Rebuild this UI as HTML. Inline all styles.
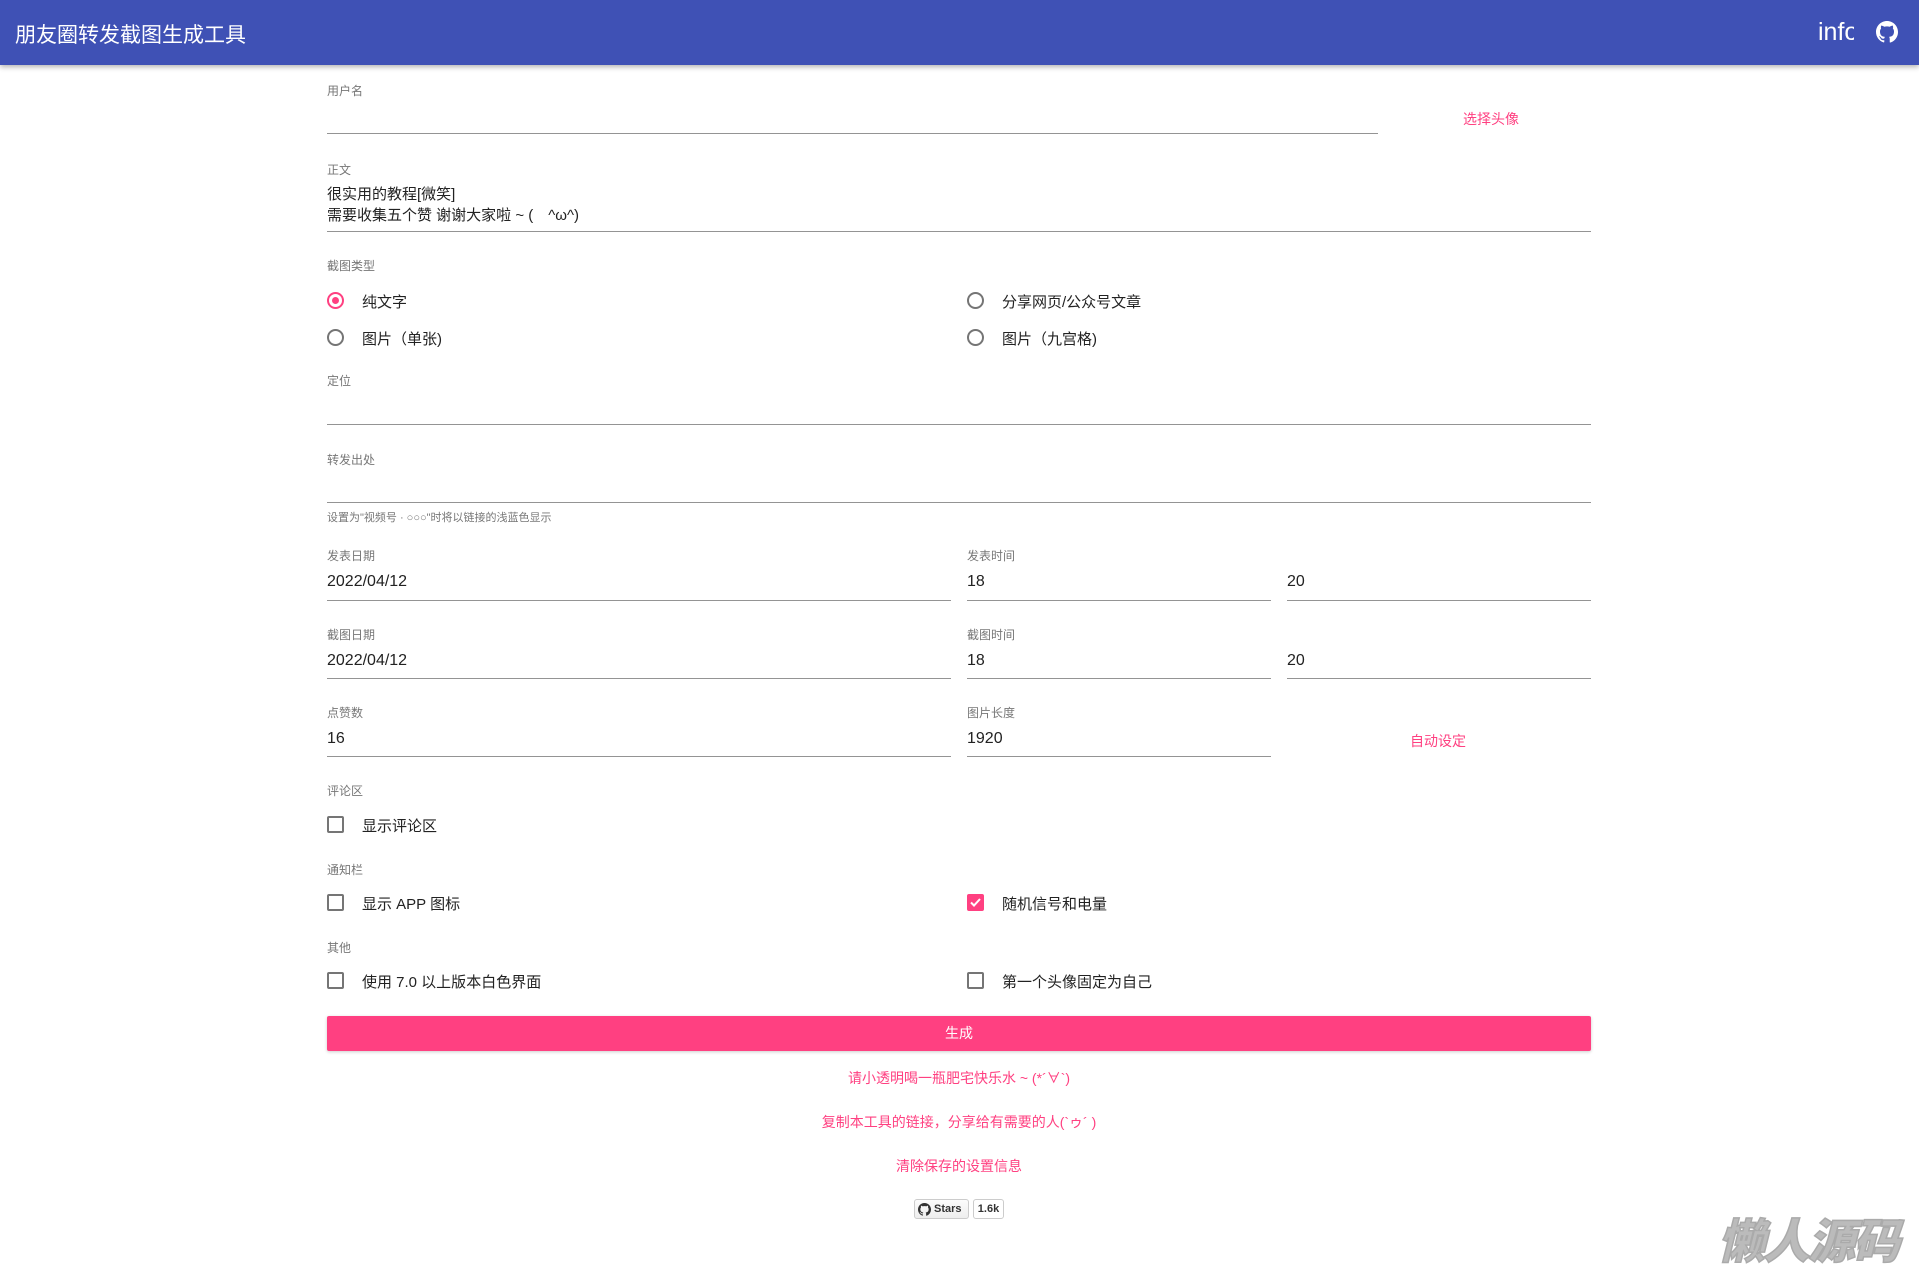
<!DOCTYPE html>
<html><head><meta charset="utf-8"><style>
*{box-sizing:border-box;margin:0;padding:0}
body{width:1919px;height:1271px;background:#fff;font-family:"Liberation Sans","Noto Sans CJK SC",sans-serif;position:relative;overflow:hidden;color:#222}
.hdr{position:absolute;left:0;top:0;width:1919px;height:65px;background:#3f51b5;box-shadow:0 2px 5px rgba(0,0,0,.3)}
.hdr .t{position:absolute;left:15px;top:19px;color:#fff;font-size:21px}
.hdr .i{position:absolute;left:1818px;top:18px;color:#fff;font-size:25px;width:36px;overflow:hidden;white-space:nowrap}
.a{position:absolute}
.lbl{font-size:12px;color:#777}
.val{font-size:16px;color:#222}
.ln{position:absolute;height:1px;background:#949494}
.pink{color:#ff4081}
.rad{position:absolute;width:17px;height:17px;border:2px solid #757575;border-radius:50%}
.rad.on{border-color:#ff4081}
.rad.on::after{content:"";position:absolute;left:3px;top:3px;width:7px;height:7px;border-radius:50%;background:#ff4081}
.cb{position:absolute;width:17px;height:17px;border:2px solid #757575;border-radius:2px}
.cb.on{background:#ff4081;border-color:#ff4081}
.txt{font-size:15px;color:#222}
.ctr{position:absolute;left:327px;width:1264px;text-align:center;font-size:14px;color:#ff4081}
</style></head><body>
<div class="hdr"><div class="t">朋友圈转发截图生成工具</div><div class="i">info</div>
<svg class="a" style="left:1876px;top:21px" width="22" height="22" viewBox="0 0 16 16"><path fill="#fff" d="M8 0C3.58 0 0 3.58 0 8c0 3.540 2.29 6.53 5.47 7.59.4.07.55-.17.55-.38v-1.33c-2.23.48-2.7-1.07-2.7-1.07-.36-.93-.89-1.17-.89-1.17-.73-.5.05-.49.05-.49.8.06 1.23.83 1.23.83.71 1.23 1.87.87 2.33.66.07-.52.28-.87.5-1.07-1.78-.2-3.64-.89-3.64-3.95 0-.87.31-1.59.82-2.15-.08-.2-.36-1.02.08-2.12 0 0 .67-.21 2.2.82.64-.18 1.32-.27 2-.27s1.36.09 2 .27c1.53-1.04 2.2-.82 2.2-.82.44 1.1.16 1.92.08 2.12.51.56.82 1.27.82 2.15 0 3.07-1.87 3.75-3.65 3.95.29.25.54.73.54 1.48v2.2c0 .21.15.46.55.38A8.01 8.01 0 0016 8c0-4.42-3.58-8-8-8z"/></svg></div>

<div class="a lbl" style="left:327px;top:82px">用户名</div>
<div class="ln" style="left:327px;top:133px;width:1051px"></div>
<div class="a pink" style="left:1463px;top:109px;font-size:14px">选择头像</div>

<div class="a lbl" style="left:327px;top:161px">正文</div>
<div class="a val" style="left:327px;top:184px;line-height:21px;font-size:15px">很实用的教程[微笑]<br>需要收集五个赞 谢谢大家啦 ~ (　^ω^)</div>
<div class="ln" style="left:327px;top:231px;width:1264px"></div>

<div class="a lbl" style="left:327px;top:257px">截图类型</div>
<div class="rad on" style="left:327px;top:292px"></div><div class="a txt" style="left:362px;top:291px">纯文字</div>
<div class="rad" style="left:967px;top:292px"></div><div class="a txt" style="left:1002px;top:291px">分享网页/公众号文章</div>
<div class="rad" style="left:327px;top:329px"></div><div class="a txt" style="left:362px;top:328px">图片（单张)</div>
<div class="rad" style="left:967px;top:329px"></div><div class="a txt" style="left:1002px;top:328px">图片（九宫格)</div>

<div class="a lbl" style="left:327px;top:372px">定位</div>
<div class="ln" style="left:327px;top:424px;width:1264px"></div>
<div class="a lbl" style="left:327px;top:451px">转发出处</div>
<div class="ln" style="left:327px;top:502px;width:1264px"></div>
<div class="a lbl" style="left:327px;top:509px;font-size:11px">设置为"视频号 · ○○○"时将以链接的浅蓝色显示</div>

<div class="a lbl" style="left:327px;top:547px">发表日期</div><div class="a val" style="left:327px;top:573px">2022/04/12</div><div class="ln" style="left:327px;top:600px;width:624px"></div>
<div class="a lbl" style="left:967px;top:547px">发表时间</div><div class="a val" style="left:967px;top:573px">18</div><div class="ln" style="left:967px;top:600px;width:304px"></div>
<div class="a val" style="left:1287px;top:573px">20</div><div class="ln" style="left:1287px;top:600px;width:304px"></div>

<div class="a lbl" style="left:327px;top:626px">截图日期</div><div class="a val" style="left:327px;top:652px">2022/04/12</div><div class="ln" style="left:327px;top:678px;width:624px"></div>
<div class="a lbl" style="left:967px;top:626px">截图时间</div><div class="a val" style="left:967px;top:652px">18</div><div class="ln" style="left:967px;top:678px;width:304px"></div>
<div class="a val" style="left:1287px;top:652px">20</div><div class="ln" style="left:1287px;top:678px;width:304px"></div>

<div class="a lbl" style="left:327px;top:704px">点赞数</div><div class="a val" style="left:327px;top:730px">16</div><div class="ln" style="left:327px;top:756px;width:624px"></div>
<div class="a lbl" style="left:967px;top:704px">图片长度</div><div class="a val" style="left:967px;top:730px">1920</div><div class="ln" style="left:967px;top:756px;width:304px"></div>
<div class="a pink" style="left:1410px;top:731px;font-size:14px">自动设定</div>

<div class="a lbl" style="left:327px;top:782px">评论区</div>
<div class="cb" style="left:327px;top:816px"></div><div class="a txt" style="left:362px;top:815px">显示评论区</div>
<div class="a lbl" style="left:327px;top:861px">通知栏</div>
<div class="cb" style="left:327px;top:894px"></div><div class="a txt" style="left:362px;top:893px">显示 APP 图标</div>
<div class="cb on" style="left:967px;top:894px"><svg width="13" height="13" viewBox="0 0 13 13" style="position:absolute;left:0;top:0"><path d="M2 6.5l3 3 6-6.5" stroke="#fff" stroke-width="2" fill="none"/></svg></div><div class="a txt" style="left:1002px;top:893px">随机信号和电量</div>
<div class="a lbl" style="left:327px;top:939px">其他</div>
<div class="cb" style="left:327px;top:972px"></div><div class="a txt" style="left:362px;top:971px">使用 7.0 以上版本白色界面</div>
<div class="cb" style="left:967px;top:972px"></div><div class="a txt" style="left:1002px;top:971px">第一个头像固定为自己</div>

<div class="a" style="left:327px;top:1016px;width:1264px;height:35px;background:#ff4081;border-radius:2px;color:#fff;font-size:14px;text-align:center;line-height:35px;box-shadow:0 1px 3px rgba(0,0,0,.2)">生成</div>
<div class="ctr" style="top:1068px">请小透明喝一瓶肥宅快乐水 ~ (*´∀`)</div>
<div class="ctr" style="top:1112px">复制本工具的链接，分享给有需要的人(`ゥ´ )</div>
<div class="ctr" style="top:1156px">清除保存的设置信息</div>

<div class="a" style="left:914px;top:1199px;width:55px;height:20px;border:1px solid #ccc;border-radius:3px;background:linear-gradient(#fcfcfc,#eee);font-size:11px;font-weight:bold;line-height:18px;padding-left:19px;color:#333">Stars
<svg style="position:absolute;left:3px;top:3px" width="13" height="13" viewBox="0 0 16 16"><path fill="#333" d="M8 0C3.58 0 0 3.58 0 8c0 3.54 2.29 6.53 5.47 7.59.4.07.55-.17.55-.38v-1.33c-2.23.48-2.7-1.07-2.7-1.07-.36-.93-.89-1.17-.89-1.17-.73-.5.05-.49.05-.49.8.06 1.23.83 1.23.83.71 1.23 1.87.87 2.33.66.07-.52.28-.87.5-1.07-1.78-.2-3.64-.89-3.64-3.95 0-.87.31-1.59.82-2.15-.08-.2-.36-1.02.08-2.12 0 0 .67-.21 2.2.82.64-.18 1.32-.27 2-.27s1.36.09 2 .27c1.53-1.04 2.2-.82 2.2-.82.44 1.1.16 1.92.08 2.12.51.56.82 1.27.82 2.15 0 3.07-1.87 3.75-3.65 3.95.29.25.54.73.54 1.48v2.2c0 .21.15.46.55.38A8.01 8.01 0 0016 8c0-4.42-3.58-8-8-8z"/></svg></div>
<div class="a" style="left:973px;top:1199px;width:31px;height:20px;border:1px solid #ccc;border-radius:3px;background:#fff;font-size:11px;font-weight:bold;line-height:18px;text-align:center;color:#333">1.6k</div>

<div class="a" style="left:1718px;top:1203px;font-size:47px;font-weight:900;font-style:italic;color:#bbb;letter-spacing:-2px;font-family:'Noto Sans CJK SC',sans-serif;-webkit-text-stroke:1.5px #aaa">懒人源码</div>
</body></html>
